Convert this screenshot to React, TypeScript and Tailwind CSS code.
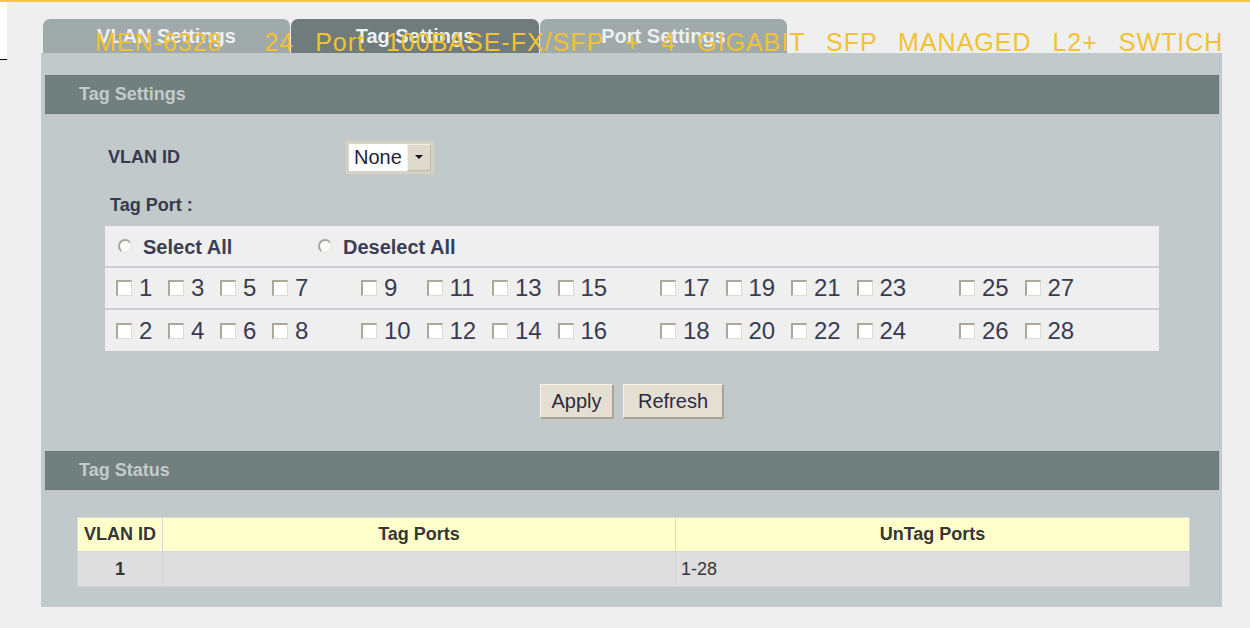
import React from "react";

const oddRow: number[][] = [
  [1, 3, 5, 7],
  [9, 11, 13, 15],
  [17, 19, 21, 23],
  [25, 27],
];
const evenRow: number[][] = oddRow.map((g) => g.map((n) => n + 1));

function Check() {
  return (
    <span className="block w-[16px] h-[16px] shrink-0 bg-white border-t-2 border-l-2 border-b border-r border-t-[#aba89b] border-l-[#aba89b] border-b-[#dedbd1] border-r-[#dedbd1]" />
  );
}

function Radio() {
  return (
    <span className="block w-[14px] h-[14px] shrink-0 rounded-full bg-[#fbfbf8] border-t-2 border-l-2 border-b border-r border-t-[#a8a699] border-l-[#a8a699] border-b-[#e3e1d9] border-r-[#e3e1d9]" />
  );
}

function PortRow({ groups, last }: { groups: number[][]; last?: boolean }) {
  return (
    <div
      className={
        "flex items-center pl-[11px] gap-[37px] " +
        (last ? "h-[41px]" : "h-[42px] border-b-2 border-[#c8d0d2]")
      }
    >
      {groups.map((g, gi) => (
        <div key={gi} className="flex">
          {g.map((n) => (
            <label
              key={n}
              className={
                "flex items-center gap-[7px] " +
                (gi === 0 ? "w-[52px]" : "w-[65.5px]")
              }
            >
              <Check />
              <span className="text-[24px] leading-none text-[#383c52]">{n}</span>
            </label>
          ))}
        </div>
      ))}
    </div>
  );
}

function SectionBar({ title }: { title: string }) {
  return (
    <div className="h-[39px] bg-[#717f7e] border border-[#6a7877] flex items-center pl-[33px]">
      <span className="text-[18px] font-bold text-[#c3cccc]">{title}</span>
    </div>
  );
}

function Tab({ label, active, w }: { label: string; active?: boolean; w: string }) {
  return (
    <div
      className={
        "h-[34px] rounded-t-[7px] flex items-center justify-center pb-[1px] text-[20px] font-bold " +
        w +
        (active ? " bg-[#6f7c7b] text-[#eef1f1]" : " bg-[#a0aaab] text-[#edf0f0]")
      }
    >
      {label}
    </div>
  );
}

function Btn({ label, w }: { label: string; w: string }) {
  return (
    <button
      className={
        "h-[35px] bg-[#e5dfd3] text-[20px] text-[#2b2b42] border-t border-l border-[#f6f3ec] border-b-2 border-r-2 border-b-[#aaa497] border-r-[#aaa497] " +
        w
      }
    >
      {label}
    </button>
  );
}

export default function App() {
  return (
    <div
      className="relative w-[1250px] h-[628px] overflow-hidden bg-[#efefef] border-t-2 border-[#f2c744]"
      style={{ fontFamily: '"Liberation Sans", Arial, sans-serif' }}
    >
      <div className="flex">
        <div className="w-[7px] h-[58px] shrink-0 bg-white border-b border-black" />
        <div className="ml-[34px] mt-[17px] w-[1181px]">
          {/* tab strip */}
          <div className="flex gap-[1px] pl-[2px]">
            <Tab label="VLAN Settings" w="w-[247px]" />
            <Tab label="Tag Settings" w="w-[248px]" active />
            <Tab label="Port Settings" w="w-[247px]" />
          </div>

          {/* main panel */}
          <div className="h-[554px] bg-[#c1c9ca] pt-[22px] pl-[4px] pr-[3px]">
            <SectionBar title="Tag Settings" />

            <div className="mt-[27px] h-[32px] flex items-center pl-[63px]">
              <span className="w-[238px] text-[18px] font-bold text-[#363a4c]">VLAN ID</span>
              <div className="w-[88px] h-[33px] border-[3px] border-[#d6d2c6] bg-white flex items-center">
                <span className="flex-1 pl-[5px] text-[20px] text-[#23233a]">None</span>
                <span className="w-[24px] h-[27px] bg-[#dedace] border-t border-l border-[#f2efe8] border-b border-r border-b-[#bdb8aa] border-r-[#bdb8aa] flex items-center justify-center">
                  <svg width="10" height="6" viewBox="0 0 10 6">
                    <path d="M1 1 L9 1 L5 5 Z" fill="#111" />
                  </svg>
                </span>
              </div>
            </div>

            <div className="mt-[22px] h-[20px] leading-[20px] pl-[65px] text-[18px] font-bold text-[#363a4c]">
              Tag Port :
            </div>

            {/* port selection grid */}
            <div className="mt-[11px] ml-[60px] w-[1054px] bg-[#efefef]">
              <div className="h-[42px] flex items-center pl-[13px] border-b-2 border-[#c8d0d2]">
                <label className="w-[200px] flex items-center gap-[11px]">
                  <Radio />
                  <span className="text-[20px] font-bold text-[#3a3e55] pt-[2px]">Select All</span>
                </label>
                <label className="flex items-center gap-[11px]">
                  <Radio />
                  <span className="text-[20px] font-bold text-[#3a3e55] pt-[2px]">Deselect All</span>
                </label>
              </div>
              <PortRow groups={oddRow} />
              <PortRow groups={evenRow} last />
            </div>

            <div className="mt-[33px] flex justify-center gap-[9px]">
              <Btn label="Apply" w="w-[74px]" />
              <Btn label="Refresh" w="w-[101px]" />
            </div>

            <div className="mt-[32px]">
              <SectionBar title="Tag Status" />
            </div>

            {/* status table */}
            <table className="mt-[27px] ml-[32px] w-[1112px] border-collapse table-fixed">
              <colgroup>
                <col className="w-[85px]" />
                <col className="w-[513px]" />
                <col className="w-[514px]" />
              </colgroup>
              <thead>
                <tr className="h-[34px] bg-[#ffffcc] text-[18px] font-bold text-[#363636]">
                  <th className="border border-[#d6dad2] p-0">VLAN ID</th>
                  <th className="border border-[#d6dad2] p-0">Tag Ports</th>
                  <th className="border border-[#d6dad2] p-0">UnTag Ports</th>
                </tr>
              </thead>
              <tbody>
                <tr className="h-[35px] bg-[#dedede] text-[18px] text-[#363636]">
                  <td className="border border-[#cfd3d1] text-center font-bold">1</td>
                  <td className="border border-[#cfd3d1]"></td>
                  <td className="border border-[#cfd3d1] pl-[5px]">1-28</td>
                </tr>
              </tbody>
            </table>
          </div>
        </div>
      </div>

      {/* product banner laid over the tab strip */}
      <div className="absolute left-[95px] top-[28px] whitespace-pre text-[25px] leading-[25px] tracking-[1px] [word-spacing:13px] text-[#f1c232]">
        MEN-6328  24 Port 100BASE-FX/SFP + 4 GIGABIT SFP MANAGED L2+ SWTICH
      </div>
    </div>
  );
}
